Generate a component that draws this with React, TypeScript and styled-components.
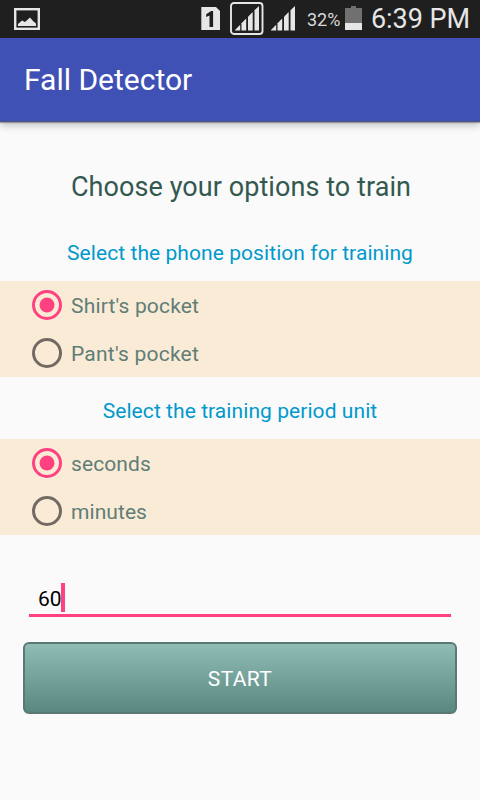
import React from "react";
import styled, { createGlobalStyle } from "styled-components";

const Global = createGlobalStyle`
  * { box-sizing: border-box; }
  body { margin: 0; background: #fafafa; font-family: Roboto, sans-serif; }
`;
const Screen = styled.div`
  width: 480px; height: 800px; background: #fafafa; overflow: hidden;
  display: flex; flex-direction: column;
`;
const StatusBar = styled.div`
  height: 38px; flex: none; background: #1f1f1f; color: #e6e6e6;
  display: flex; align-items: center; padding: 0 10px 0 13px;
  position: relative; z-index: 1;
`;
const Icon = styled.svg<{ $left?: number }>`
  flex: none; display: block; margin-left: ${p => p.$left ?? 0}px;
`;
const Spacer = styled.div` flex: 1; `;
const Percent = styled.span`
  font-size: 18px; line-height: 38px; width: 38px; margin-left: 11px; padding-top: 1px; white-space: nowrap; color: #d8d8d8;
`;
const Clock = styled.span`
  font-size: 27px; line-height: 36px; letter-spacing: -0.05px; width: 99px; margin-left: 9px;
  white-space: nowrap;
`;
const AppBar = styled.header`
  height: 84px; flex: none; background: #3f51b5; color: #fff; font-size: 30px;
  display: flex; align-items: center; padding-left: 24px;
  border-bottom: 1px solid #4c5687;
  box-shadow: 0 1px 1px rgba(0,0,0,.28), 0 3px 8px rgba(0,0,0,.24);
`;
const Title = styled.h1`
  margin: 48px 0 0 2px; height: 35px; line-height: 35px; text-align: center;
  font-size: 27px; letter-spacing: .07px; font-weight: 400; color: #335850;
`;
const Label = styled.h2<{ $top: number; $bottom: number }>`
  margin: ${p => p.$top}px 0 ${p => p.$bottom}px; height: 28px; line-height: 28px; text-align: center;
  font-size: 21px; letter-spacing: .07px; font-weight: 400; color: #0099cc;
`;
const Group = styled.div` background: #faebd7; flex: none; `;
const Option = styled.label`
  height: 48px; display: flex; align-items: center; gap: 8px; padding-left: 31px;
  color: #607d76; font-size: 21px;
`;
const OptionText = styled.span<{ $spacing: number }>`
  padding-top: 2px; letter-spacing: ${p => p.$spacing}px;
`;
const Field = styled.div`
  margin: 48px 29px 0; height: 34px; border-bottom: 3px solid #ff4081;
  display: flex; align-items: center; padding-left: 9px; font-size: 21px; color: #000;
`;
const Caret = styled.span` width: 4px; height: 29px; margin: 0 0 2px -1px; background: #ff4081; `;
const Start = styled.button`
  margin: 25px 23px 0; height: 72px; border: 2px solid #5a7972; border-radius: 6px; padding: 2px 0 0;
  background: linear-gradient(#8fbcb5, #5a8880); color: #fff; font: 21px Roboto, sans-serif; letter-spacing: .35px;
`;
const Radio = ({ on }: { on?: boolean }) => (
  <svg width="32" height="32" viewBox="0 0 32 32">
    <circle cx="16" cy="16" r="13.5" fill="none" strokeWidth="3" stroke={on ? "#ff4081" : "#736b63"} />
    {on && <circle cx="16" cy="16" r="7.5" fill="#ff4081" />}
  </svg>
);

const PictureIcon = () => (
  <Icon width="28" height="38" viewBox="0 0 28 38">
    <rect x="2.2" y="9.2" width="23.6" height="19.6" fill="none" stroke="#e6e6e6" strokeWidth="2.4" />
    <path d="M5 26v-2l4-3.5 3 1.5 5-4.5 3 3.500 3 2.500v2.500z" fill="#e6e6e6" />
  </Icon>
);
const SimIcon = () => (
  <Icon width="20" height="38" viewBox="0 0 20 38">
    <path d="M.3 7H15l4 4v19H.3z" fill="#e6e6e6" />
    <path d="M5.2 14.3l5-3.3h1.900V27H8.500V15.400l-3.300 1.500z" fill="#1f1f1f" />
  </Icon>
);
const Bars = () => (
  <g fill="#e6e6e6">
    <path d="M0 30.500v-.5l5.200-5.300v5.800z" />
    <path d="M6.500 30.500v-7.200l4.700-4.800v12z" />
    <path d="M13 30.500V16.800l4.700-4.700v18.400z" />
    <path d="M19.500 30.500V10.200L24 6v24.500z" />
  </g>
);
const BoxedSignal = () => (
  <Icon $left={9} width="34" height="38" viewBox="0 0 34 38">
    <rect x="1" y="3" width="31.500" height="31" rx="3" fill="none" stroke="#e6e6e6" strokeWidth="1.900" />
    <g transform="translate(5 0)"><Bars /></g>
  </Icon>
);
const Signal = () => (
  <Icon $left={7} width="25" height="38" viewBox="0 0 25 38"><Bars /></Icon>
);
const Battery = () => (
  <Icon width="17" height="38" viewBox="0 0 17 38">
    <path d="M6 6h5v2h6v22H0V8h6z" fill="#707070" />
    <rect y="23" width="17" height="7" fill="#e6e6e6" />
  </Icon>
);

export default function App() {
  return (
    <Screen>
      <Global />
      <StatusBar>
        <PictureIcon />
        <Spacer />
        <SimIcon />
        <BoxedSignal />
        <Signal />
        <Percent>32%</Percent>
        <Battery />
        <Clock>6:39 PM</Clock>
      </StatusBar>
      <AppBar><span>Fall Detector</span></AppBar>
      <Title>Choose your options to train</Title>
      <Label $top={34} $bottom={14}>Select the phone position for training</Label>
      <Group>
        <Option><Radio on /><OptionText $spacing={0.17}>Shirt's pocket</OptionText></Option>
        <Option><Radio /><OptionText $spacing={0.22}>Pant's pocket</OptionText></Option>
      </Group>
      <Label $top={20} $bottom={14}>Select the training period unit</Label>
      <Group>
        <Option><Radio on /><OptionText $spacing={0.1}>seconds</OptionText></Option>
        <Option><Radio /><OptionText $spacing={0.07}>minutes</OptionText></Option>
      </Group>
      <Field>60<Caret /></Field>
      <Start>START</Start>
    </Screen>
  );
}
